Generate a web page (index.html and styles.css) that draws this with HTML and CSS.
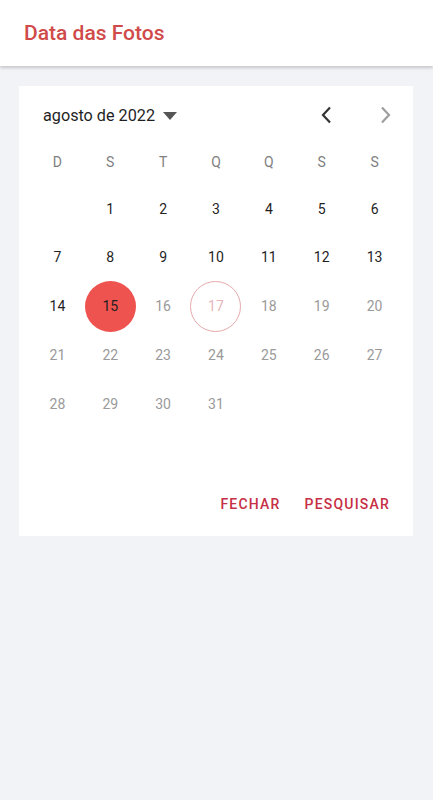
FILE: index.html
```html
<!DOCTYPE html>
<html>
<head>
    <title>Data das Fotos</title>
    <link rel="stylesheet" href="styles.css">
</head>
<body>
    <header class="app-bar">
        <h1>Data das Fotos</h1>
    </header>
    <main class="content">
        <div class="picker">
            <div class="picker-header">
                <button class="month-select">
                    agosto de 2022
                    <svg width="14" height="8" viewBox="0 0 14 8"><path d="M0 0h14L7 8z" fill="#555"></path></svg>
                </button>
                <div class="nav">
                    <button class="nav-btn">
                        <svg width="24" height="24" viewBox="0 0 24 24"><path d="M15 4.5 8 12l7 7.5" fill="none" stroke="#333" stroke-width="2.2"></path></svg>
                    </button>
                    <button class="nav-btn">
                        <svg width="24" height="24" viewBox="0 0 24 24"><path d="M9 4.5l7 7.5-7 7.5" fill="none" stroke="#9e9e9e" stroke-width="2.2"></path></svg>
                    </button>
                </div>
            </div>
            <div class="weekdays">
                <span>D</span><span>S</span><span>T</span><span>Q</span><span>Q</span><span>S</span><span>S</span>
            </div>
            <div class="days">
                <span></span>
                <span class="day">1</span>
                <span class="day">2</span>
                <span class="day">3</span>
                <span class="day">4</span>
                <span class="day">5</span>
                <span class="day">6</span>
                <span class="day">7</span>
                <span class="day">8</span>
                <span class="day">9</span>
                <span class="day">10</span>
                <span class="day">11</span>
                <span class="day">12</span>
                <span class="day">13</span>
                <span class="day">14</span>
                <span class="day selected">15</span>
                <span class="day disabled">16</span>
                <span class="day disabled today">17</span>
                <span class="day disabled">18</span>
                <span class="day disabled">19</span>
                <span class="day disabled">20</span>
                <span class="day disabled">21</span>
                <span class="day disabled">22</span>
                <span class="day disabled">23</span>
                <span class="day disabled">24</span>
                <span class="day disabled">25</span>
                <span class="day disabled">26</span>
                <span class="day disabled">27</span>
                <span class="day disabled">28</span>
                <span class="day disabled">29</span>
                <span class="day disabled">30</span>
                <span class="day disabled">31</span>
            </div>
            <div class="actions">
                <button class="text-btn">Fechar</button>
                <button class="text-btn">Pesquisar</button>
            </div>
        </div>
    </main>
</body>
</html>
```

FILE: styles.css
```css
:root {
    --primary-color: #d04a4a;
    --accent-color: #c62f45;
    --selected-color: #ef5350;
    --background-color: #f2f3f7;
    --card-bg: #ffffff;
    --text-color: #1f1f1f;
    --muted-color: #9a9a9a;
}
* {
    box-sizing: border-box;
}
body {
    font-family: Roboto, "Noto Sans", Arial, sans-serif;
    margin: 0;
    padding: 0;
    background-color: var(--background-color);
    color: var(--text-color);
}
button {
    font-family: inherit;
    background: none;
    border: none;
    padding: 0;
    cursor: pointer;
}
.app-bar {
    height: 66px;
    background-color: var(--card-bg);
    display: flex;
    align-items: center;
    padding: 0 24px;
    box-shadow: 0 2px 3px rgba(0, 0, 0, 0.18);
    position: relative;
}
.app-bar h1 {
    margin: 0;
    font-size: 21px;
    font-weight: 500;
    color: var(--primary-color);
}
.content {
    padding: 20px 20px 0 19px;
}
.picker {
    background-color: var(--card-bg);
    padding: 0 12px 0 12px;
}
.picker-header {
    height: 58px;
    display: flex;
    align-items: center;
    justify-content: space-between;
    padding-left: 12px;
}
.month-select {
    display: flex;
    align-items: center;
    gap: 8px;
    font-size: 16.2px;
    color: var(--text-color);
    padding-top: 1px;
}
.nav {
    display: flex;
    gap: 34px;
    padding-right: 4px;
}
.nav-btn {
    width: 24px;
    height: 24px;
}
.nav-btn svg {
    display: block;
}
.weekdays,
.days {
    display: grid;
    grid-template-columns: repeat(7, 1fr);
}
.weekdays {
    height: 36px;
    align-items: center;
    font-size: 14px;
    color: #808080;
    text-align: center;
    margin-bottom: 3px;
}
.days {
    grid-auto-rows: 48.75px;
    font-size: 14px;
}
.day {
    width: 51px;
    height: 51px;
    margin: auto;
    display: flex;
    align-items: center;
    justify-content: center;
    border-radius: 50%;
}
.day.disabled {
    color: var(--muted-color);
}
.day.selected {
    background-color: var(--selected-color);
    color: var(--text-color);
}
.day.today {
    border: 1px solid #e6a9ad;
    color: #e7b6ba;
}
.actions {
    height: 109px;
    display: flex;
    justify-content: flex-end;
    align-items: flex-end;
    gap: 24px;
    padding: 0 11px 24px 0;
}
.text-btn {
    font-size: 14px;
    font-weight: 500;
    letter-spacing: 1.2px;
    text-transform: uppercase;
    color: var(--accent-color);
}
```
